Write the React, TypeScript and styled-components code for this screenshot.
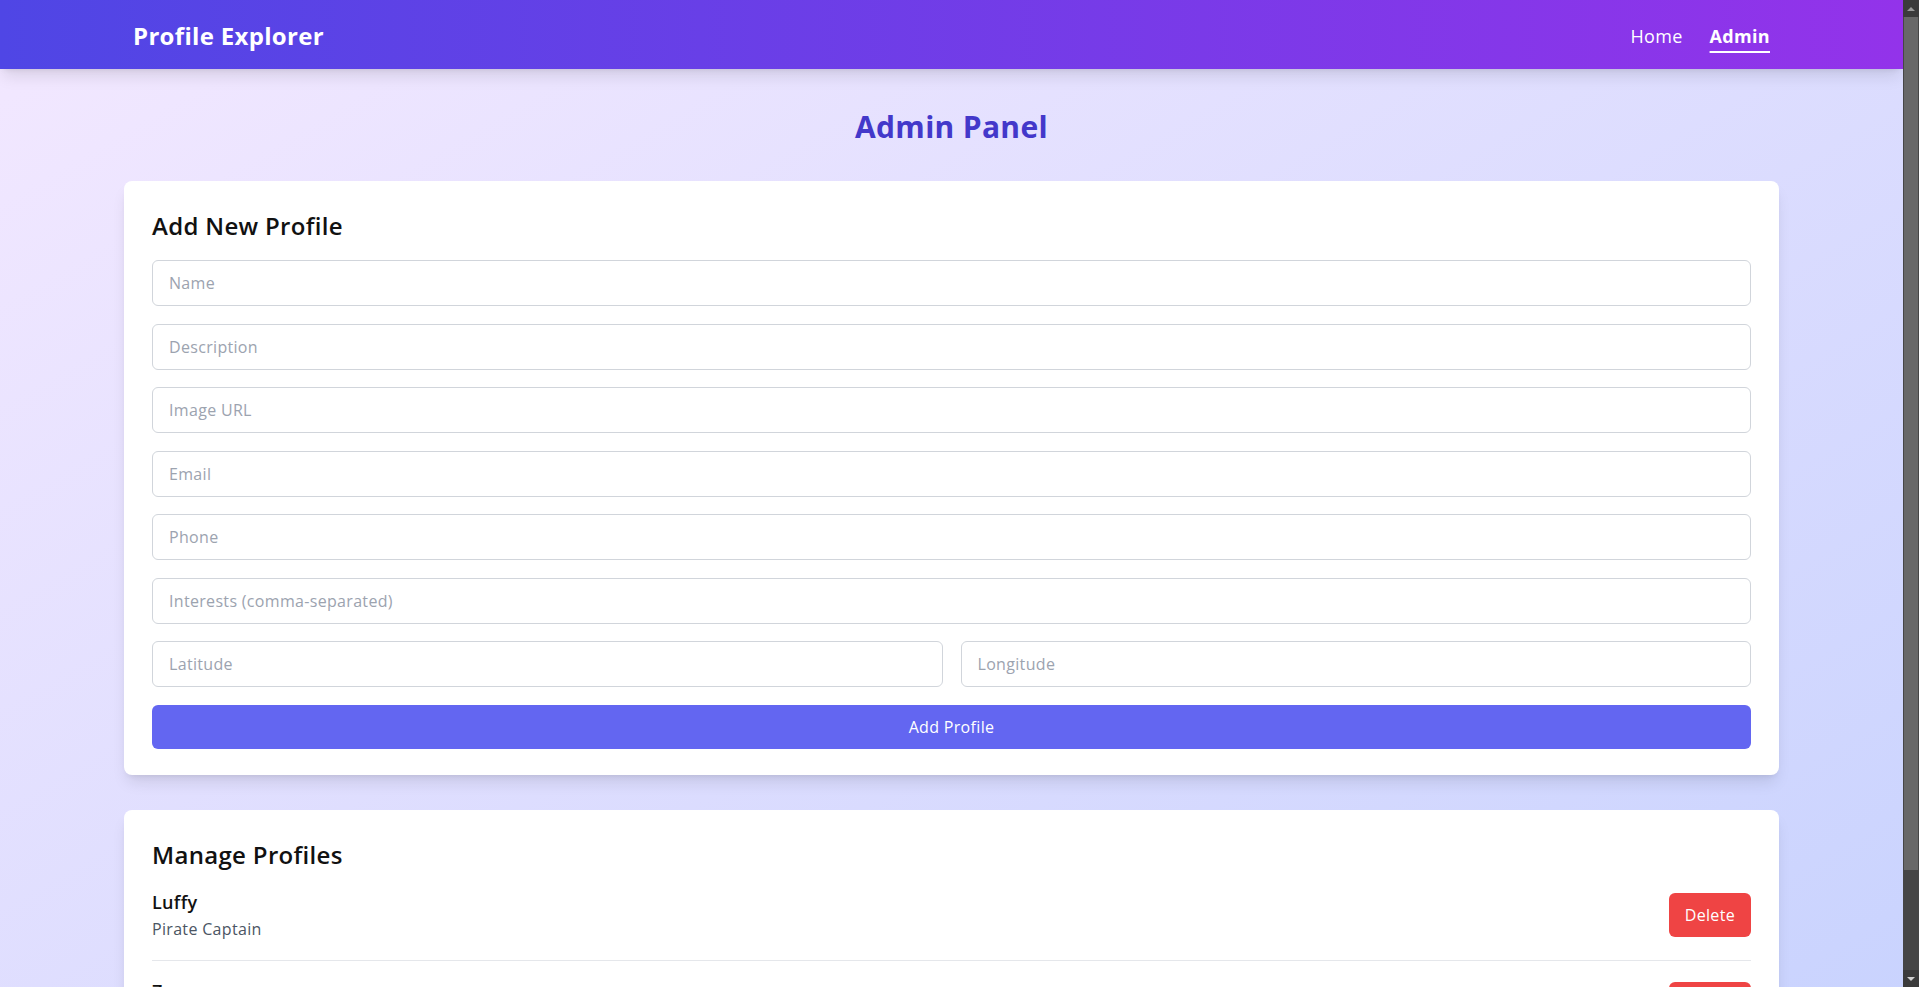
import React from "react";
import styled, { createGlobalStyle } from "styled-components";

const GlobalStyle = createGlobalStyle`
  body {
    margin: 0;
    font-family: "Open Sans", "Noto Sans", sans-serif;
    letter-spacing: 0.02em;
    color: #111111;
  }
  * { box-sizing: border-box; }
`;

const Page = styled.div`
  min-height: 100vh;
  margin-right: 16px;
  background: linear-gradient(to bottom right, #f3e8ff, #c7d2fe);
  padding-bottom: 32px;
`;

const ScrollBar = styled.div`
  position: fixed;
  top: 0;
  right: 0;
  width: 16px;
  height: 100vh;
  display: flex;
  flex-direction: column;
  background: #464646;
  z-index: 10;
`;

const ScrollArrow = styled.div<{ $down?: boolean }>`
  height: 17px;
  flex: none;
  display: flex;
  align-items: center;
  justify-content: center;
  background: #3b3b3b;
  &::before {
    content: "";
    width: 0;
    height: 0;
    border-left: 4px solid transparent;
    border-right: 4px solid transparent;
    ${(p) =>
      p.$down ? "border-top: 4px solid #cfcfcf;" : "border-bottom: 4px solid #9a9a9a;"}
  }
`;

const ScrollThumb = styled.div`
  height: 853px;
  margin: 0 1px;
  flex: none;
  background: #686868;
`;

const ScrollRest = styled.div`
  flex: 1;
`;

const Header = styled.header`
  height: 69px;
  padding: 3px 133px 0;
  display: flex;
  align-items: center;
  justify-content: space-between;
  background: linear-gradient(to right, #4f46e5, #9333ea);
  box-shadow: 0 10px 15px -3px rgba(0, 0, 0, 0.1), 0 4px 6px -4px rgba(0, 0, 0, 0.1);
  color: #ffffff;
`;

const Logo = styled.div`
  font-size: 24px;
  line-height: 32px;
  font-weight: 700;
`;

const Nav = styled.nav`
  display: flex;
  align-items: center;
  gap: 27px;
`;

const NavLink = styled.a<{ $active?: boolean }>`
  font-size: 18px;
  line-height: 28px;
  color: #ffffff;
  font-weight: ${(p) => (p.$active ? 700 : 400)};
  text-decoration: ${(p) => (p.$active ? "underline" : "none")};
  text-decoration-thickness: 2px;
  text-underline-offset: 8px;
  cursor: pointer;
`;

const Main = styled.main`
  padding: 40px 124px 0;
`;

const Title = styled.h1`
  margin: 0 0 36px;
  text-align: center;
  font-size: 30px;
  line-height: 36px;
  font-weight: 700;
  color: #4338ca;
`;

const Card = styled.section`
  background: #ffffff;
  border-radius: 8px;
  padding: 29px 28px 26px;
  box-shadow: 0 10px 15px -3px rgba(0, 0, 0, 0.1), 0 4px 6px -4px rgba(0, 0, 0, 0.1);
  & + & {
    margin-top: 35px;
  }
`;

const CardTitle = styled.h2<{ $gap: number }>`
  margin: 0 0 ${(p) => p.$gap}px;
  font-size: 24px;
  line-height: 32px;
  font-weight: 600;
  color: #111111;
`;

const Form = styled.form`
  display: flex;
  flex-direction: column;
  gap: 17.5px;
`;

const Row = styled.div`
  display: grid;
  grid-template-columns: 1fr 1fr;
  gap: 18px;
`;

const Input = styled.input`
  width: 100%;
  height: 46px;
  padding: 0 16px;
  border: 1px solid #d1d5db;
  border-radius: 6px;
  font-family: inherit;
  font-size: 16px;
  letter-spacing: inherit;
  color: #111111;
  background: #ffffff;
  outline: none;
  &::placeholder {
    color: #9ca3af;
  }
`;

const PrimaryButton = styled.button`
  height: 44px;
  width: 100%;
  border: none;
  border-radius: 6px;
  background: #6366f1;
  color: #ffffff;
  font-family: inherit;
  font-size: 16px;
  letter-spacing: inherit;
  cursor: pointer;
`;

const ProfileList = styled.ul`
  list-style: none;
  margin: 0;
  padding: 0;
`;

const ProfileItem = styled.li`
  display: flex;
  align-items: center;
  justify-content: space-between;
  padding: 16px 0 18px;
  border-bottom: 1px solid #e5e7eb;
`;

const ProfileName = styled.div`
  font-size: 18px;
  line-height: 28px;
  font-weight: 600;
  color: #111111;
`;

const ProfileDesc = styled.div`
  font-size: 16px;
  line-height: 26px;
  color: #4b5563;
`;

const DeleteButton = styled.button`
  height: 44px;
  padding: 0 16px;
  border: none;
  border-radius: 6px;
  background: #ef4444;
  color: #ffffff;
  font-family: inherit;
  font-size: 16px;
  letter-spacing: inherit;
  cursor: pointer;
`;

const profiles = [
  { name: "Luffy", description: "Pirate Captain" },
  { name: "Zoro", description: "Swordsman" },
];

const fields = ["Name", "Description", "Image URL", "Email", "Phone", "Interests (comma-separated)"];

export default function App() {
  return (
    <>
      <GlobalStyle />
      <Page>
        <Header>
          <Logo>Profile Explorer</Logo>
          <Nav>
            <NavLink>Home</NavLink>
            <NavLink $active>Admin</NavLink>
          </Nav>
        </Header>
        <Main>
          <Title>Admin Panel</Title>
          <Card>
            <CardTitle $gap={18}>Add New Profile</CardTitle>
            <Form onSubmit={(e) => e.preventDefault()}>
              {fields.map((f) => (
                <Input key={f} placeholder={f} />
              ))}
              <Row>
                <Input placeholder="Latitude" />
                <Input placeholder="Longitude" />
              </Row>
              <PrimaryButton type="submit">Add Profile</PrimaryButton>
            </Form>
          </Card>
          <Card>
            <CardTitle $gap={1}>Manage Profiles</CardTitle>
            <ProfileList>
              {profiles.map((p) => (
                <ProfileItem key={p.name}>
                  <div>
                    <ProfileName>{p.name}</ProfileName>
                    <ProfileDesc>{p.description}</ProfileDesc>
                  </div>
                  <DeleteButton>Delete</DeleteButton>
                </ProfileItem>
              ))}
            </ProfileList>
          </Card>
        </Main>
      </Page>
      <ScrollBar aria-hidden>
        <ScrollArrow />
        <ScrollThumb />
        <ScrollRest />
        <ScrollArrow $down />
      </ScrollBar>
    </>
  );
}
